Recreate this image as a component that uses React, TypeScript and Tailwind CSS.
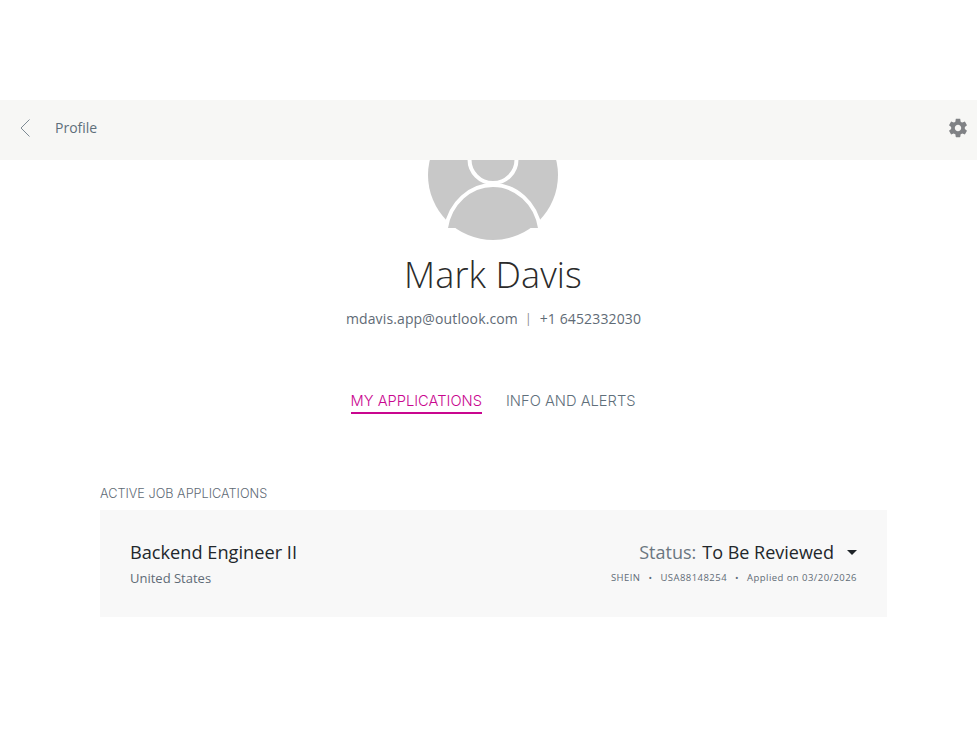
function Avatar() {
  return (
    <svg width="130" height="130" viewBox="0 0 130 130" className="block">
      <circle cx="65" cy="65" r="65" fill="#c8c8c8" />
      <circle cx="65" cy="49.5" r="23.5" fill="#c8c8c8" stroke="#fff" strokeWidth="4" />
      <path d="M18 118 C22 93 42 75 65 75 C88 75 108 93 112 118" fill="#c8c8c8" stroke="#fff" strokeWidth="4" />
    </svg>
  )
}

function Gear() {
  return (
    <svg width="22" height="22" viewBox="0 0 24 24" fill="#808285">
      <path d="M19.43 12.98c.04-.32.07-.64.07-.98s-.03-.66-.07-.98l2.11-1.65c.19-.15.24-.42.12-.64l-2-3.46c-.12-.22-.39-.3-.61-.22l-2.49 1c-.52-.4-1.08-.73-1.69-.98l-.38-2.65C14.46 2.18 14.25 2 14 2h-4c-.25 0-.46.18-.49.42l-.38 2.65c-.61.25-1.17.59-1.69.98l-2.49-1c-.23-.09-.49 0-.61.22l-2 3.46c-.13.22-.07.49.12.64l2.11 1.65c-.04.32-.07.65-.07.98s.03.66.07.98l-2.11 1.65c-.19.15-.24.42-.12.64l2 3.46c.12.22.39.3.61.22l2.49-1c.52.4 1.08.73 1.69.98l.38 2.65c.03.24.24.42.49.42h4c.25 0 .46-.18.49-.42l.38-2.65c.61-.25 1.17-.59 1.69-.98l2.49 1c.23.09.49 0 .61-.22l2-3.46c.12-.22.07-.49-.12-.64l-2.11-1.65zM12 15.5c-1.93 0-3.5-1.57-3.5-3.5s1.57-3.5 3.5-3.5 3.5 1.57 3.5 3.5-1.57 3.5-3.5 3.5z" />
    </svg>
  )
}

function BackArrow() {
  return (
    <svg width="12" height="18" viewBox="0 0 12 18" fill="none" stroke="#7d8a94" strokeWidth="1">
      <path d="M10.5 .5 L2 9 L10.5 17.5" />
    </svg>
  )
}

export default function App() {
  return (
    <div className="min-h-[737px] bg-white pt-[100px] font-['Open_Sans',sans-serif]">
      <header className="relative z-10 flex h-[60px] items-center bg-[#f7f7f5] pb-[5px] pl-[19px] pr-[8px]">
        <BackArrow />
        <span className="ml-[24px] text-[14px] text-[#5f6f7b]">Profile</span>
        <span className="ml-auto">
          <Gear />
        </span>
      </header>

      <div className="-mt-[50px] flex flex-col items-center pl-[9px]">
        <Avatar />
        <h1 className="mt-[10px] text-[36px] leading-[50px] font-light tracking-[0.1px] text-[#2b2b2b]">Mark Davis</h1>
        <p className="mt-[9px] flex items-center pl-[1px] text-[14px] leading-[20px] tracking-[0.13px] text-[#5f6b76]">
          <span>mdavis.app@outlook.com</span>
          <span className="ml-[7px] mr-[8px] text-[12px] text-[#8a8a8a]">|</span>
          <span>+1 6452332030</span>
        </p>
        <nav className="mt-[62px] flex items-start gap-[24px] font-['Inter',sans-serif] text-[14.7px] font-light leading-[20px]">
          <span className="border-b-2 border-[#c9068f] pb-[1px] text-[#c9068f]">MY APPLICATIONS</span>
          <span className="text-[#5f6f7b]">INFO AND ALERTS</span>
        </nav>
      </div>

      <section className="mx-[100px] mt-[71px] w-[787px]">
        <h2 className="font-['Inter',sans-serif] text-[12.7px] leading-[18px] font-light text-[#5f6b76]">ACTIVE JOB APPLICATIONS</h2>
        <div className="mt-[7px] flex h-[107px] justify-between bg-[#f8f8f8] px-[30px] pt-[30px]">
          <div>
            <div className="text-[18.2px] leading-[25px] text-[#22272b]">Backend Engineer II</div>
            <div className="mt-[4px] text-[13px] leading-[18px] text-[#5f6b76]">United States</div>
          </div>
          <div className="flex flex-col items-end">
            <div className="flex items-center text-[18px] leading-[25px]">
              <span className="text-[#6b7680]">Status:</span>
              <span className="ml-[6px] text-[#22272b]">To Be Reviewed</span>
              <span className="ml-[13px] h-0 w-0 border-x-[5px] border-t-[5px] border-x-transparent border-t-[#1f2428]" />
            </div>
            <div className="mt-[6px] flex items-center text-[9.5px] leading-[14px] tracking-[0.45px] text-[#5f6b76]">
              <span>SHEIN</span>
              <span className="mx-[8px]">•</span>
              <span>USA88148254</span>
              <span className="mx-[8px]">•</span>
              <span>Applied on 03/20/2026</span>
            </div>
          </div>
        </div>
      </section>
    </div>
  )
}
